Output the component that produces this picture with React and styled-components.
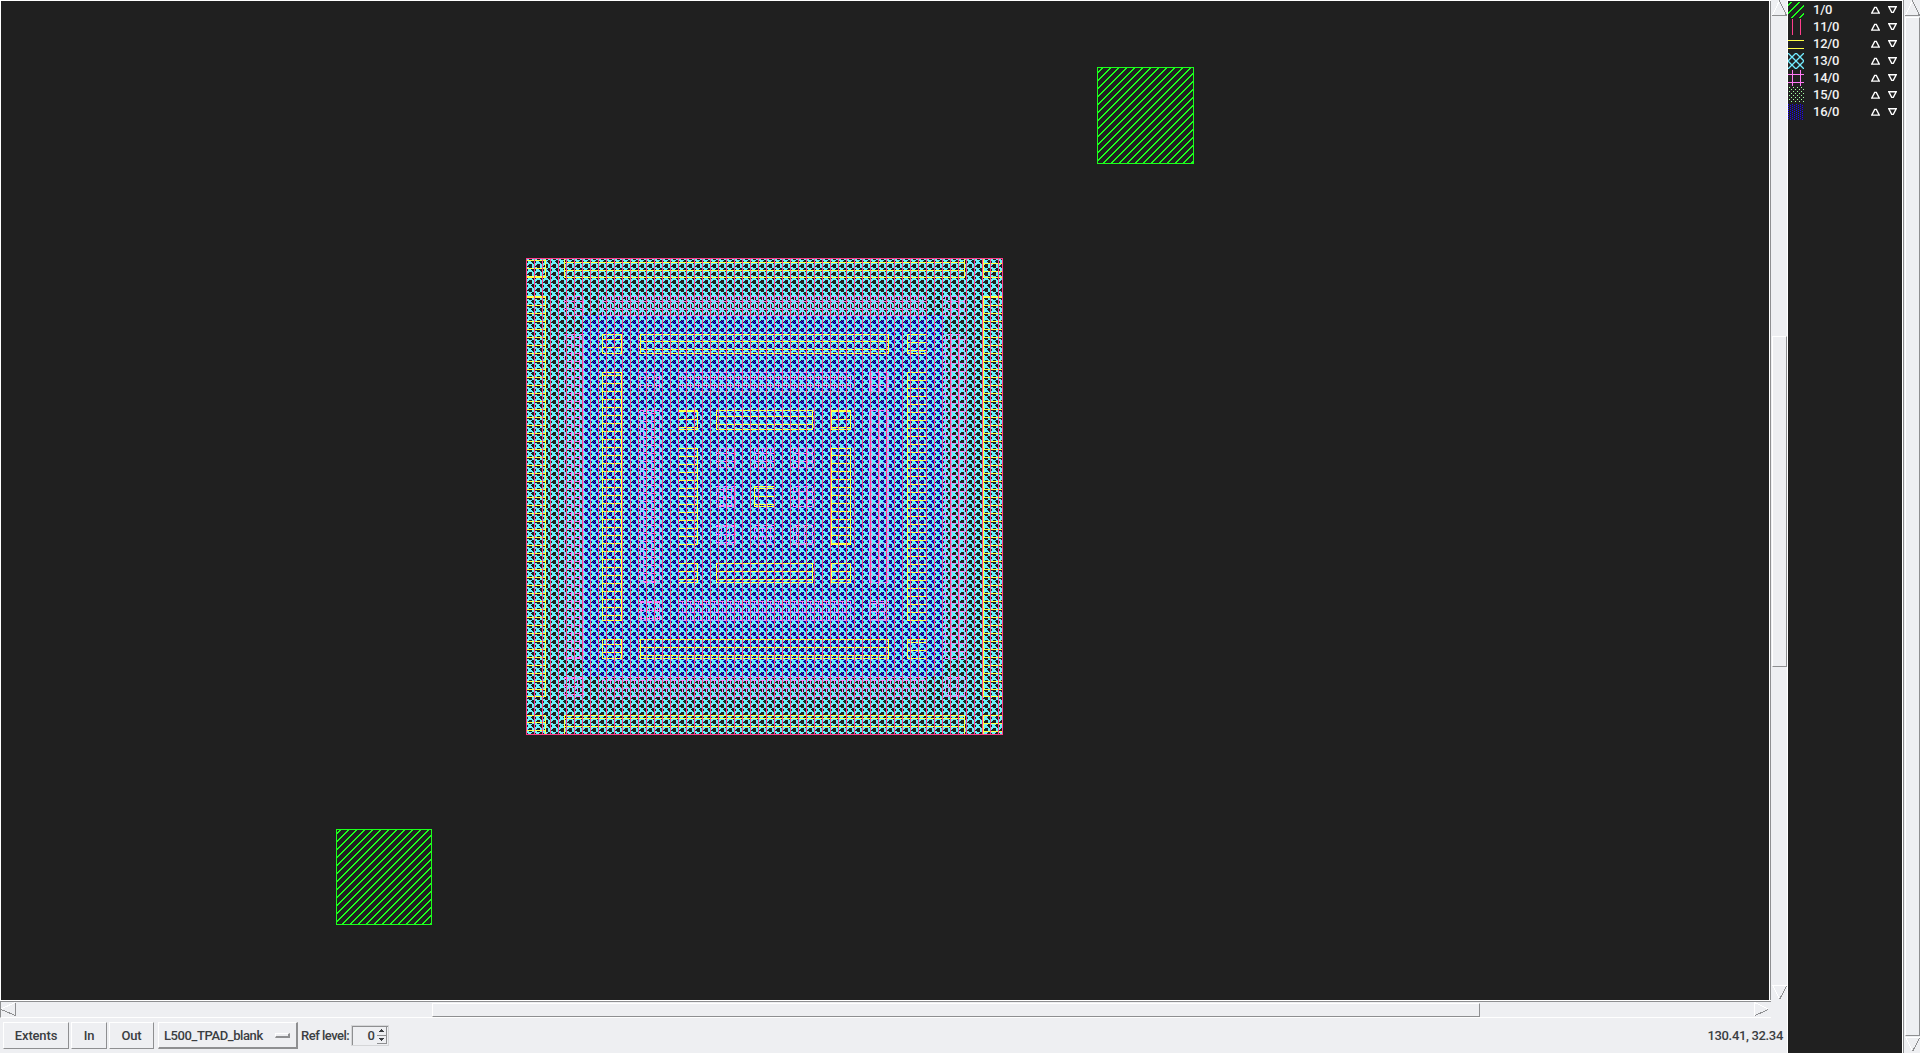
import React from "react";
import styled, { createGlobalStyle, css } from "styled-components";

const C = {
  panel: "#eeeff2", dark: "#202020", shade: "#8e8f91", white: "#ffffff",
  green: "#1cff1c", pink: "#ff3f8c", yellow: "#ffff46", cyan: "#69f2fa",
  magenta: "#ff7af5", mint: "#a3ffa3", blue: "#1c00ff", ink: "#3b3e42",
};

const Global = createGlobalStyle`
  *{box-sizing:border-box}
  html,body{margin:0;background:${C.panel};overflow:hidden}
  body{font:500 13px Roboto,"Liberation Sans",sans-serif;color:${C.ink}}
  svg{display:block;shape-rendering:crispEdges}
`;
const Screen = styled.div`display:flex;width:1920px;height:1053px;background:${C.panel};`;
const Left = styled.main`display:flex;flex-direction:column;width:1787px;`;
const Work = styled.div`display:grid;grid-template-columns:1771px 16px;height:1001px;`;
const Viewport = styled.section`width:1771px;height:1001px;background:${C.dark};border:1px solid #fff;border-right:0;box-shadow:inset -1px 0 ${C.shade},inset -2px 0 #fff;
  svg{margin:-1px 0 0 -1px}`;
const Trough = styled.div`
  display:flex;background:${C.panel};
  ${(p) => p.$axis === "y"
    ? css`flex-direction:column;width:16px;height:${p.$len}px;padding-left:1px;`
    : css`flex-direction:row;width:${p.$len}px;height:17px;border-top:1px solid ${C.shade};border-left:1px solid ${C.shade};border-bottom:1px solid #fff;`}
`;
const Thumb = styled.div`
  background:${C.panel};border:1px solid;border-color:#fff ${C.shade} ${C.shade} #fff;flex:none;
  ${(p) => p.$axis === "y"
    ? css`height:${p.$size}px;margin-top:${p.$before}px;margin-bottom:${p.$after}px;`
    : css`width:${p.$size}px;height:14px;margin:1px ${p.$after}px 0 ${p.$before}px;`}
`;
const Bar = styled.footer`display:flex;align-items:center;height:35px;padding:0 4px 0 3px;`;
const Button = styled.button`
  width:${(p) => p.$w}px;height:27px;margin-right:2px;padding:0;background:${C.panel};color:inherit;
  font:inherit;letter-spacing:-.15px;border:1px solid;border-color:#fff ${C.shade} ${C.shade} #fff;
`;
const Option = styled(Button)`
  display:flex;align-items:center;justify-content:space-between;padding:0 6px 0 5px;border-width:1px 2px 2px 1px;margin:0 1px 0 2px;letter-spacing:-.4px;
`;
const Dash = styled.i`width:15px;height:5px;border:1px solid;border-color:#fff ${C.shade} ${C.shade} #fff;border-width:1px 2px 2px 1px;`;
const Label = styled.label`margin-left:2px;width:50px;letter-spacing:-.5px;white-space:nowrap;`;
const Spin = styled.div`display:flex;align-items:center;justify-content:flex-end;width:38px;height:21px;border:1px solid #d5d6d8;box-shadow:inset 1px 1px ${C.shade};padding-right:1px;gap:2px;`;
const Position = styled.output`margin-left:auto;letter-spacing:-.33px;`;
const Layers = styled.aside`width:116px;height:1053px;background:${C.dark};border:1px solid #fff;border-width:1px 1px 0 1px;`;
const Row = styled.div`display:grid;grid-template-columns:16px 67px 17px 17px;align-items:center;height:17px;color:#f2f2f2;font-weight:500;`;
const Swatch = styled.svg`width:16px;height:16px;align-self:end;`;
const Name = styled.span`padding-left:9px;letter-spacing:-.25px;line-height:16px;`;
const RightScroll = styled.div`display:flex;width:17px;height:1053px;border-left:1px solid ${C.shade};`;
const ArrowIcon = styled.svg`flex:none;`;
const MoveIcon = styled.svg`width:9px;height:9px;path{shape-rendering:geometricPrecision;}`;

function Arrow({ dir }) {
  const shapes = {
    up: [["M7.5 .5L.5 15", "#fff"], ["M7.5 .5L14.5 15.5H0", C.shade]],
    down: [["M0 .5H15M1 1L7.5 14", "#fff"], ["M14.5 1L7.5 14.5", C.shade]],
    left: [["M0 7L14 .5", "#fff"], ["M0 7.5L14.5 13.5V.5", C.shade]],
    right: [["M.5 14V.5L14 7", "#fff"], ["M1 13.5L14.5 7.5", C.shade]],
  };
  return (
    <ArrowIcon width="15" height={dir === "up" || dir === "down" ? 16 : 15}>
      {shapes[dir].map(([d, c]) => <path key={c} d={d} stroke={c} fill="none" />)}
    </ArrowIcon>
  );
}

const hatch = [
  "...###..",
  "..####..",
  ".#####..",
  "...###..",
  "......##",
  ".#...###",
  ".#....##",
  ".......#",
];
const U = 19.04;
const X = (k) => Math.round(526 + k * U);
const Y = (k) => Math.round(258 + k * U);

function Cells({ rows, on, color }) {
  return rows.flatMap((r, y) => [...r].map((c, x) => c === on
    ? <rect key={x + "-" + y} x={x} y={y} width="1" height="1" fill={color} /> : null));
}

function Patterns() {
  return (
    <defs>
      <pattern id="slash" width="8" height="8" patternUnits="userSpaceOnUse">
        <Cells rows={[".##.....", "##......", "#......#", "......##", ".....##.", "....##..", "...##...", "..##...."]} on="#" color={C.green} />
      </pattern>
      <pattern id="cross" x="6" y="0" width="8" height="8" patternUnits="userSpaceOnUse">
        <Cells rows={hatch} on="." color={C.cyan} />
      </pattern>
      <pattern id="vert" x="6" width="8" height="8" patternUnits="userSpaceOnUse">
        <rect width="1" height="8" fill={C.pink} />
      </pattern>
      <pattern id="dots" width="2" height="2" patternUnits="userSpaceOnUse">
        <rect width="1" height="1" fill={C.blue} /><rect x="1" y="1" width="1" height="1" fill={C.blue} />
      </pattern>
    </defs>
  );
}

function Outline({ box: [a, b, c, d], color }) {
  return <rect x={X(a) + 0.5} y={Y(b) + 0.5} width={X(c) - X(a)} height={Y(d) - Y(b)} fill="none" stroke={color} />;
}

function Ruled({ box, phase, color, vertical }) {
  const [a, b, c, d] = box;
  const lines = [];
  for (let y = Y(b); y < Y(d); y++) if (y % 8 === phase) lines.push(`M${X(a)} ${y + 0.5}H${X(c) + 1}`);
  if (vertical !== undefined)
    for (let x = X(a); x < X(c); x++) if (x % 8 === vertical) lines.push(`M${x + 0.5} ${Y(b)}V${Y(d)}`);
  return <g><path d={lines.join("")} stroke={color} /><Outline box={box} color={color} /></g>;
}

const ring = (k) => {
  const e = 24 - k, s = k + 2, t = 23 - k;
  return [
    [k, k, k + 1, k + 1], [s, k, t, k + 1], [e, k, e + 1, k + 1],
    [k, s, k + 1, t], [e, s, e + 1, t],
    [k, e, k + 1, e + 1], [s, e, t, e + 1], [e, e, e + 1, e + 1],
  ];
};
const yellowPhases = { 0: [4, 6, 7, 1, 1, 2, 6, 3], 4: [3, 5, 6, 7, 4, 4, 7, 2], 8: [3, 0, 3, 0, 7, 3, 3, 3] };
const magentaPhases = [5, 5, 5, 1, 3, 6, 0, 7];

function Pad({ x, y, size }) {
  return <rect x={x + 0.5} y={y + 0.5} width={size} height={size} fill="url(#slash)" stroke={C.green} />;
}

function MagentaRings() {
  return [2, 6, 10].map((k) => ring(k).map((b, i) => (
    <Ruled key={k + "-" + i} box={b} phase={(magentaPhases[i] + k - 2) % 8} vertical={[0, 2, 7, 3, 7, 1, 2, 4][i]} color={C.magenta} />
  )));
}

function Layout() {
  return (
    <svg width="1768" height="1000" viewBox="0 0 1768 1000">
      <Patterns />
      <Pad x={1097} y={67} size={96} />
      <Pad x={336} y={829} size={95} />
      <rect x={X(3)} y={Y(3)} width={X(22) - X(3)} height={Y(22) - Y(3)} fill="url(#dots)" />
      <MagentaRings />
      <rect x="526" y="258" width="477" height="477" fill="url(#cross)" />
      <g opacity="0.3"><MagentaRings /></g>
      {[0, 4, 8].map((k) => ring(k).map((b, i) => (
        <Ruled key={k + "-" + i} box={b} phase={yellowPhases[k][i]} color={C.yellow} />
      )))}
      <Ruled box={[12, 12, 13, 13]} phase={0} color={C.yellow} />
      <rect x="526" y="258" width="477" height="477" fill="url(#vert)" />
      <Outline box={[0, 0, 25, 25]} color={C.pink} />
    </svg>
  );
}

const swatches = {
  "1/0": <path d="M0 3.5L3.5 0M0 11.5L11.5 0M3.5 16L16 3.5M11.5 16L16 11.5" stroke={C.green} strokeWidth="1.5" />,
  "11/0": <path d="M4.5 0V16M12.5 0V16" stroke={C.pink} />,
  "12/0": <path d="M0 4.5H16M0 12.5H16" stroke={C.yellow} />,
  "13/0": <path d="M0 0L16 16M8 0L16 8M0 8L8 16M16 0L0 16M8 0L0 8M16 8L8 16" stroke="#72ebff" strokeWidth="1.3" shapeRendering="geometricPrecision" />,
  "14/0": <path d="M4.5 0V16M12.5 0V16M0 4.5H16M0 12.5H16" stroke={C.magenta} />,
  "15/0": <g>{[...Array(8)].map((_, r) => [0, 1, 2, 3].map((c) => <rect key={r + "-" + c} x={c * 4 + (r % 2 ? 3 : 1)} y={r * 2} width="1" height="1" fill={C.mint} />))}</g>,
  "16/0": <g>{[...Array(8)].map((_, r) => [0, 1, 2, 3, 4, 5, 6, 7].map((c) => <rect key={r + "-" + c} x={c * 2} y={r * 2 + (c % 2)} width="1" height="1" fill={C.blue} />))}</g>,
};

function Move({ down }) {
  return (
    <MoveIcon>
      <path d={down ? "M.7 1.7H8.3L5.3 7.4H3.7Z" : "M.7 8.1H8.3L5.3 2.4H3.7Z"} fill="none" stroke="#fff" strokeWidth="1.4" />
    </MoveIcon>
  );
}

export default function App() {
  return (
    <Screen>
      <Global />
      <Left>
        <Work>
          <Viewport><Layout /></Viewport>
          <Trough $axis="y" $len={1001}>
            <Arrow dir="up" />
            <Thumb $axis="y" $size={331} $before={320} $after={318} />
            <Arrow dir="down" />
          </Trough>
        </Work>
        <Trough $axis="x" $len={1771}>
          <Arrow dir="left" />
          <Thumb $axis="x" $size={1048} $before={416} $after={274} />
          <Arrow dir="right" />
        </Trough>
        <Bar>
          <Button $w={66}>Extents</Button>
          <Button $w={36}>In</Button>
          <Button $w={45}>Out</Button>
          <Option $w={140}>L500_TPAD_blank<Dash /></Option>
          <Label>Ref level:</Label>
          <Spin>
            0
            <svg width="10" height="17">
              <path d="M0 8.5H10M9.5 0V17M0 16.5H10" stroke={C.shade} />
              <path d="M2 5L4.5 2L7 5ZM2 11H7L4.5 14Z" fill={C.ink} />
            </svg>
          </Spin>
          <Position>130.41, 32.34</Position>
        </Bar>
      </Left>
      <Layers>
        {Object.entries(swatches).map(([name, art]) => (
          <Row key={name}>
            <Swatch>{art}</Swatch>
            <Name>{name}</Name>
            <Move />
            <Move down />
          </Row>
        ))}
      </Layers>
      <RightScroll>
        <Trough $axis="y" $len={1053}>
          <Arrow dir="up" />
          <Thumb $axis="y" $size={1019} $before={1} $after={1} />
          <Arrow dir="down" />
        </Trough>
      </RightScroll>
    </Screen>
  );
}
